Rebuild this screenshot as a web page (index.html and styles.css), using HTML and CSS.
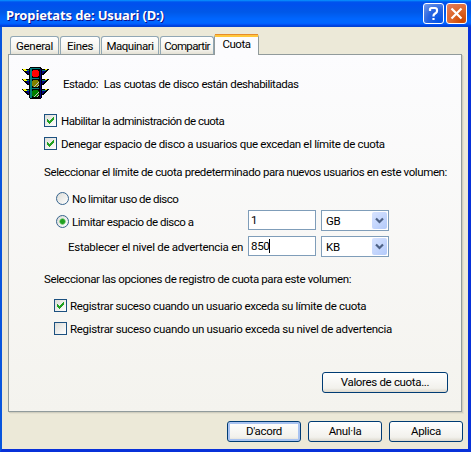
FILE: index.html
```html
<!DOCTYPE html>
<html lang="ca">
<head>
<meta charset="utf-8">
<title>Propietats de: Usuari (D:)</title>
<link rel="stylesheet" href="styles.css">
</head>
<body>
<main class="window">
  <header class="titlebar">
    <h1>Propietats de: Usuari (D:)</h1>
    <button class="caption help" aria-label="Ajuda"><svg width="21" height="21" viewBox="0 0 21 21"><path d="M7 8V6.500Q7 5 8.500 5h3.500Q14 5 14 7v1q0 1-1 2l-1.500 1Q10.500 11.700 10.500 13v.5M10.500 15v2" /></svg></button>
    <button class="caption close" aria-label="Tanca"><svg width="21" height="21" viewBox="0 0 21 21"><path d="M5.500 5.500l10 10M15.500 5.500l-10 10"/></svg></button>
  </header>
  <nav class="tabs">
    <span class="tab general">General</span>
    <span class="tab eines">Eines</span>
    <span class="tab maquinari">Maquinari</span>
    <span class="tab compartir">Compartir</span>
    <span class="tab cuota">Cuota</span>
  </nav>
  <section class="panel">
    <div class="row status">
      <svg class="light" width="27" height="33" viewBox="0 0 27 33" shape-rendering="crispEdges">
        <g id="arms">
          <path fill="#000" d="M0 2h8v6H5V7H4V6H3V5H2V4H1V3H0zM27 2h-8v6h3V7h1V6h1V5h1V4h1V3h1z"/>
          <path fill="#008080" d="M3 3h4v1H3zM24 3h-4v1h4z"/>
          <path fill="#000080" d="M4 4h3v3H6V6H5V5H4zM23 4h-3v3h1V6h1V5h1z"/>
          <path fill="#ff0" d="M1 2h3v1h1v1H2V3H1zM23 2h2v1h-2z"/>
        </g>
        <use href="#arms" y="10"/><use href="#arms" y="20"/>
        <path fill="#000" d="M8 0h11v1h1v30h-1v1H8v-1H7V1h1z"/>
        <path fill="#008080" d="M8 1h2v30H8zM10 1h8v1h-8zM10 11h7v1h-7zM10 21h7v1h-7z"/>
        <path fill="#000080" d="M18 2h1v29h-1z"/>
        <path fill="red" d="M11 3h5v1h1v5h-1v1h-5V9h-1V4h1z"/>
        <path fill="#808000" d="M11 13h5v1h1v5h-1v1h-5v-1h-1v-5h1z"/>
        <path fill="#008000" d="M11 23h5v1h1v5h-1v1h-5v-1h-1v-5h1z"/>
        <path fill="#c0c0c0" d="M16 15h1v1h-1v1h-1v1h-1v1h-1v1h-1v-1h1v-1h1v-1h1v-1h1zM16 25h1v1h-1v1h-1v1h-1v1h-1v1h-1v-1h1v-1h1v-1h1v-1h1zM16 18h1v1h-1v1h-1v-1h1zM16 28h1v1h-1v1h-1v-1h1z"/>
      </svg>
      <span class="t-estado">Estado:&nbsp; Las cuotas de disco están deshabilitadas</span>
    </div>
    <label class="row enable"><i class="check"><svg width="11" height="11" viewBox="0 0 11 11" shape-rendering="crispEdges"><path d="M2 4h1v1h1v1h1V5h1V4h1V3h1V2h1v3H8v1H7v1H6v1H5v1H4V8H3V7H2z"/></svg></i><span class="t-enable">Habilitar la administración de cuota</span></label>
    <label class="row deny"><i class="check"><svg width="11" height="11" viewBox="0 0 11 11" shape-rendering="crispEdges"><path d="M2 4h1v1h1v1h1V5h1V4h1V3h1V2h1v3H8v1H7v1H6v1H5v1H4V8H3V7H2z"/></svg></i><span class="t-deny">Denegar espacio de disco a usuarios que excedan el límite de cuota</span></label>
    <div class="row limit-title"><span class="t-limit">Seleccionar el límite de cuota predeterminado para nuevos usuarios en este volumen:</span></div>
    <label class="row nolimit"><i class="radio"></i><span class="t-nolimit">No limitar uso de disco</span></label>
    <div class="row limit"><label class="lead"><i class="radio on"></i><span class="t-space">Limitar espacio de disco a</span></label><span class="input">1</span><span class="select">GB<b><svg width="15" height="17" viewBox="0 0 15 17"><path d="M4 6.500l3.500 3.500L11 6.500"/></svg></b></span></div>
    <div class="row warn"><span class="lead"><span class="t-warn">Establecer el nivel de advertencia en</span></span><span class="input">850<u class="caret"></u></span><span class="select">KB<b><svg width="15" height="17" viewBox="0 0 15 17"><path d="M4 6.500l3.500 3.500L11 6.500"/></svg></b></span></div>
    <div class="row log-title"><span class="t-log">Seleccionar las opciones de registro de cuota para este volumen:</span></div>
    <label class="row log"><i class="check"><svg width="11" height="11" viewBox="0 0 11 11" shape-rendering="crispEdges"><path d="M2 4h1v1h1v1h1V5h1V4h1V3h1V2h1v3H8v1H7v1H6v1H5v1H4V8H3V7H2z"/></svg></i><span class="t-log1">Registrar suceso cuando un usuario exceda su límite de cuota</span></label>
    <label class="row log second"><i class="check"></i><span class="t-log2">Registrar suceso cuando un usuario exceda su nivel de advertencia</span></label>
    <button class="button values">Valores de cuota...</button>
  </section>
  <footer class="actions">
    <button class="button default">D'acord</button>
    <button class="button">Anul·la</button>
    <button class="button">Aplica</button>
  </footer>
</main>
</body>
</html>
```
FILE: styles.css
```css
* { box-sizing: border-box; }
body { margin: 0; overflow: hidden; font: 11.5px/16px Roboto, "Liberation Sans", sans-serif; letter-spacing: -.33px; color: #000; }
button { font: inherit; letter-spacing: inherit; padding: 0; margin: 0; color: #000; }
.window { width: 471px; height: 452px; background: #ece9d8; border: solid #0831d9; border-width: 0 3px 3px 2px; border-left-color: #0855dd; display: flex; flex-direction: column; }
.titlebar { height: 27px; margin: 0 -3px 0 -2px; flex: none; padding: 3px 4px 0 6px; display: flex; background: linear-gradient(#0997ff 0, #0053ee 2px, #0050ee 4px, #0058e8 12px, #0066ff 19px, #0066ff 23px, #005bff 24px, #003dd7 26px, #0048d0 27px); }
h1 { margin: 3px auto 0 0; font: bold 13px/18px "Noto Sans", sans-serif; color: #fff; text-shadow: 1px 1px #0f1089; white-space: nowrap; letter-spacing: -.13px; }
.caption { width: 21px; height: 21px; border: 1px solid #fff; border-radius: 3px; margin-left: 2px; overflow: hidden; }
.caption svg { display: block; margin: -1px; fill: none; stroke: #fff; stroke-width: 2.200; }
.help { background: radial-gradient(circle at 80% 90%, #0054e9 0, #2663e0 50%, #799de9 100%); }
.close { background: radial-gradient(circle at 80% 90%, #cc4600 0, #dc6527 45%, #e57f64 100%); }
.tabs { height: 27px; flex: none; display: flex; align-items: flex-end; padding-left: 8px; }
.tab { height: 18px; margin-right: 1px; border: 1px solid #91a7b4; border-bottom: 0; border-radius: 3px 3px 0 0; background: linear-gradient(#fff, #f3f2ec 75%, #e4e1d4); line-height: 19px; text-align: center; white-space: nowrap; }
.general { width: 49px; }
.eines { width: 40px; }
.maquinari { width: 58px; letter-spacing: -.45px; }
.compartir { width: 54px; margin-right: 0; letter-spacing: -.65px; }
.cuota { width: 45px; height: 21px; margin-bottom: -1px; position: relative; background: #fcfcfe; border-color: #919b9c; border-top: 3px solid #ffc73c; line-height: 15px; letter-spacing: -.5px; }
.cuota::before { content: ""; position: absolute; top: -3px; left: 0; right: 0; height: 1px; background: #e68b2c; }
.panel { height: 358px; width: 454px; margin-left: 6px; flex: none; border: 1px solid #919b9c; background: linear-gradient(#fcfcfe, #f4f3ee); box-shadow: 1px 1px #d0cebf, 2px 2px #e3e0d0; display: flex; flex-direction: column; align-items: flex-start; }
.row { display: flex; align-items: center; height: 17px; flex: none; white-space: nowrap; }
.row.status { height: 33px; margin: 12px 0 0 13px; gap: 14px; }
.light { flex: none; }
.check, .radio { flex: none; width: 13px; height: 13px; border: 1px solid #1c5180; background: linear-gradient(135deg, #dcdcd7, #fff); }
.check svg { display: block; fill: #21a121; }
.radio { border-radius: 50%; border-color: #36648e; }
.radio.on { background: radial-gradient(circle, #21a121 0 2px, #8fd28f 3px, transparent 3.500px), linear-gradient(135deg, #dcdcd7, #fff); }
.enable { margin: 12px 0 0 35px; gap: 4px; }
.deny { margin: 6px 0 0 35px; gap: 4px; }
.row.limit-title { height: 16px; margin: 12px 0 0 35px; }
.nolimit { margin: 10px 0 0 47px; gap: 3px; }
.row.limit { height: 23px; margin: 3px 0 0 47px; }
.limit .lead { width: 192px; display: flex; align-items: center; gap: 3px; }
.row.warn { height: 22px; margin: 3px 0 0 59px; }
.warn .lead { width: 180px; }
.input { width: 68px; height: 20px; margin-right: 5px; align-self: flex-start; border: 1px solid #7f9db9; background: #fff; padding: 0 2px; line-height: 18px; display: flex; align-items: center; }
.caret { width: 1px; height: 14px; background: #000; }
.select { width: 68px; height: 21px; align-self: flex-start; border: 1px solid #7f9db9; background: #fff; padding: 1px 1px 1px 4px; display: flex; justify-content: space-between; line-height: 18px; }
.select b { width: 15px; height: 17px; background: linear-gradient(135deg, #d7e3ff, #b3cafa); border-radius: 2px; }
.select svg { display: block; fill: none; stroke: #4d6185; stroke-width: 2.200; }
.row.log-title { height: 16px; margin: 13px 0 0 35px; }
.log { margin: 10px 0 0 45px; gap: 3px; }
.second { margin-top: 6px; }
.t-estado { letter-spacing: -.47px; word-spacing: .5px; }
.t-enable { letter-spacing: -.5px; }
.t-limit { letter-spacing: -.39px; }
.t-nolimit { letter-spacing: -.5px; }
.t-space { letter-spacing: -.48px; }
.t-warn { letter-spacing: -.28px; }
.t-log { letter-spacing: -.38px; }
.t-log2 { letter-spacing: -.31px; }
.button { width: 74px; height: 21px; border: 1px solid #003c74; border-radius: 3px; background: linear-gradient(#fff, #f2f1ec 80%, #dcd8cd); line-height: 19px; text-align: center; }
.values { width: 126px; margin: 35px 0 0 313px; }
.actions { display: flex; justify-content: flex-end; gap: 7px; margin: 9px 5px 0 0; }
.default { box-shadow: inset 0 0 0 2px #a9c3f1; }
```
